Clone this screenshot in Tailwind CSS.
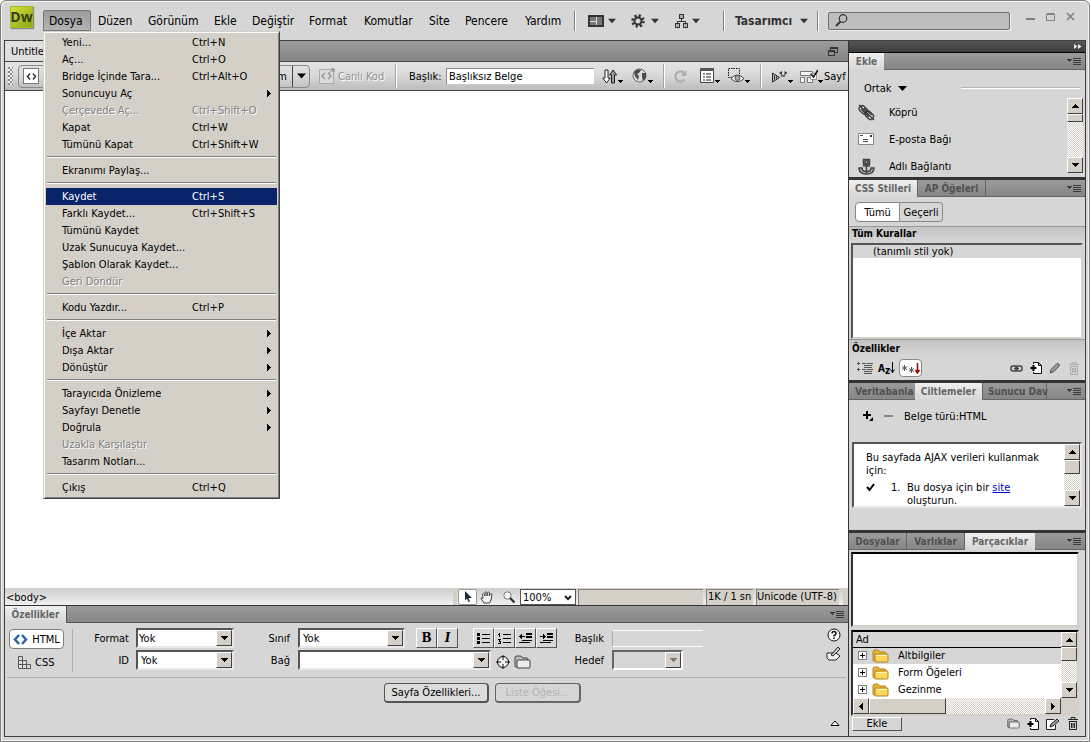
<!DOCTYPE html>
<html lang="tr">
<head>
<meta charset="utf-8">
<title>Dreamweaver</title>
<script src="https://cdn.jsdelivr.net/npm/@tailwindcss/browser@4"></script>
</head>
<body class="bg-white text-black text-[11px] leading-[13px] font-['DejaVu_Sans_Condensed','DejaVu_Sans',sans-serif]">
<svg class="hidden">
  <symbol id="down" viewBox="0 0 9 5"><path d="M0 0h9L4.500 5z" fill="currentColor"/></symbol>
  <symbol id="sdown" viewBox="0 0 7 4" shape-rendering="crispEdges"><path d="M0 0h7v1H6v1H5v1H4v1H3V3H2V2H1V1H0z" fill="currentColor"/></symbol>
  <symbol id="sup" viewBox="0 0 7 4" shape-rendering="crispEdges"><path d="M0 4h7V3H6V2H5V1H4V0H3v1H2v1H1v1H0z" fill="currentColor"/></symbol>
  <symbol id="right" viewBox="0 0 4 7" shape-rendering="crispEdges"><path d="M0 0h1v1h1v1h1v1h1v1H3v1H2v1H1v1H0z" fill="currentColor"/></symbol>
  <symbol id="left" viewBox="0 0 4 7" shape-rendering="crispEdges"><path d="M4 0H3v1H2v1H1v1H0v1h1v1h1v1h1v1h1z" fill="currentColor"/></symbol>
  <symbol id="opts" viewBox="0 0 14 9" shape-rendering="crispEdges"><path d="M0 2h5v1H4v1H3v1H2V4H1V3H0zM6 1h8v1H6zM6 3h8v1H6zM6 5h8v1H6zM6 7h8v1H6z" fill="#3a3a3a"/></symbol>
  <symbol id="folder" viewBox="0 0 17 14"><path d="M1 3Q1 1 3 1h3l2 2h5q1 0 1 2v7H2Q1 12 1 11z" fill="#e8b73a" stroke="#b08322"/><path d="M3 5h12q1 0 1 1v6q0 1-1 1H4q-1 0-1-1z" fill="#f9d85c" stroke="#b08322"/><path d="M4.500 6.500h10" stroke="#fff8c8"/></symbol>
  <symbol id="gfolder" viewBox="0 0 17 14"><path d="M1 3Q1 1 3 1h4l2 2h4q1 0 1 2v7H2Q1 12 1 11z" fill="#bbb" stroke="#444"/><path d="M3 5h12q1 0 1 1v6q0 1-1 1H4q-1 0-1-1z" fill="#ececec" stroke="#444"/></symbol>
  <symbol id="trash" viewBox="0 0 12 13"><path d="M1 2.500h10M4 2V.5h4V2M2 4.500h8M2.500 4.500v8h7v-8M4.500 6v5M6 6v5M7.500 6v5" fill="none" stroke="currentColor"/></symbol>
  <symbol id="newdoc" viewBox="0 0 12 12"><path d="M3.500 2V.5h5l3 3v8h-8V10M8.500.5v3h3" fill="#fff" stroke="#111"/><path d="M3.500 3v6M.5 6h6" stroke="#000" stroke-width="2"/></symbol>
  <symbol id="tick" viewBox="0 0 5 4" shape-rendering="crispEdges"><path d="M0 0h5v1H4v1H3v1H2V2H1V1H0z" fill="#000"/></symbol>
</svg>

<div class="h-screen min-h-[700px] pr-px">
<div class="relative flex flex-col h-full bg-[#d6d6d6] border border-[#808080] rounded-t-md overflow-hidden shadow-[inset_1px_1px_0_#f4f4f4,inset_-1px_-1px_0_#f4f4f4]">

  <header class="flex h-[39px] shrink-0 items-center pl-[9px] pr-[13px] text-[12px] leading-[14px]">
    <div class="w-[23px] h-[22px] mb-2 mr-[10px] shrink-0 flex items-center justify-center bg-linear-to-br from-[#d6e038] to-[#8ca614] border border-[#a5bd20] text-[14px] font-bold text-[#33401a] shadow-[1px_1px_1px_#888] font-['Open_Sans',sans-serif]">Dw</div>
    <nav class="flex [&>button]:h-[21px] [&>button]:shrink-0 [&>button]:text-left [&>button]:whitespace-nowrap">
      <button class="w-[48px] pl-[5px] border border-[#777] rounded-t-xs bg-linear-to-b from-[#9c9c9c] to-[#b4b4b4]">Dosya</button>
      <button class="w-[50px] pl-[7px]">Düzen</button>
      <button class="w-[66px] pl-[7px]">Görünüm</button>
      <button class="w-[38px] pl-[7px]">Ekle</button>
      <button class="w-[57px] pl-[7px]">Değiştir</button>
      <button class="w-[55px] pl-[7px]">Format</button>
      <button class="w-[65px] pl-[7px]">Komutlar</button>
      <button class="w-[36px] pl-[7px]">Site</button>
      <button class="w-[60px] pl-[7px]">Pencere</button>
      <button class="w-[50px] pl-[7px]">Yardım</button>
    </nav>
    <div class="ml-auto flex items-center shrink-0 text-[#333]">
      <span class="w-0.5 h-5 border-l border-[#808080] bg-white mr-3"></span>
      <button aria-label="Düzen" class="flex items-center gap-1 w-[43px]"><svg width="16" height="12" viewBox="0 0 16 12" shape-rendering="crispEdges"><path d="M0 0h16v12H0z" fill="#333"/><path d="M2 2h6v4H2zM2 7h6v3H2zM9 2h5v8H9z" fill="#777"/><path d="M8 2h1v8H8zM2 6h6v1H2z" fill="#ddd"/></svg><svg width="8" height="6"><use href="#down"/></svg></button>
      <button aria-label="Ayarlar" class="flex items-center gap-1.5 w-[44px]"><svg width="14" height="14" viewBox="0 0 14 14"><circle cx="7" cy="7" r="5.500" fill="none" stroke="#333" stroke-width="2.500" stroke-dasharray="2.200 2.120"/><circle cx="7" cy="7" r="3.500" fill="none" stroke="#333" stroke-width="2"/></svg><svg width="8" height="6"><use href="#down"/></svg></button>
      <button aria-label="Site" class="flex items-center gap-1 w-[48px]"><svg width="13" height="14" viewBox="0 0 13 14" fill="#aaa" stroke="#333" shape-rendering="crispEdges"><path d="M4.500.5h4v4h-4zM.5 9.500h4v4h-4zM8.500 9.500h4v4h-4z"/><path d="M6.500 5v2M2.500 9V7.500h8V9" fill="none"/></svg><svg width="8" height="6"><use href="#down"/></svg></button>
      <span class="w-0.5 h-5 border-l border-[#808080] bg-white mr-[10px]"></span>
      <button class="flex items-center justify-between w-[73px] font-bold mr-[9px]">Tasarımcı<svg width="8" height="6"><use href="#down"/></svg></button>
      <span class="w-0.5 h-5 border-l border-[#808080] bg-white mr-[9px]"></span>
      <label class="flex items-center w-[182px] h-[18px] border border-[#6e6e6e] rounded-xs bg-[#bebebe] pl-[6px] shadow-[1px_1px_0_#f0f0f0]"><svg width="13" height="13" viewBox="0 0 13 13" fill="none" stroke="#333"><circle cx="8" cy="4.500" r="3.800" stroke-width="1.200"/><path d="M5.500 7.500L1 12" stroke-width="1.800"/></svg><input aria-label="Ara" class="min-w-0 flex-1 outline-none bg-transparent"></label>
      <div class="flex items-center gap-[10px] ml-[16px] mb-2 text-[#808080]">
        <button aria-label="Küçült"><svg width="10" height="10" viewBox="0 0 10 10"><path d="M0 7h9" stroke="currentColor" stroke-width="2"/></svg></button>
        <button aria-label="Büyüt"><svg width="10" height="10" viewBox="0 0 10 10"><path d="M.5 2.500h8v6h-8zM.5 1.500h8" fill="none" stroke="currentColor"/></svg></button>
        <button aria-label="Kapat"><svg width="10" height="10" viewBox="0 0 10 10"><path d="M1 1l7 7M8 1L1 8" stroke="currentColor" stroke-width="1.500"/></svg></button>
      </div>
    </div>
  </header>

  <div class="flex flex-1 min-h-0 mx-[3px] mb-1 border border-[#3f3f3f]">
    <main class="flex flex-col flex-1 min-w-0">
      <div class="flex h-[21px] shrink-0 bg-linear-to-b from-[#9b9b9b] to-[#868686] border-b border-[#444] items-center">
        <button class="w-[100px] h-5 pl-1.5 text-left bg-[#e0e0e0]">Untitled-1</button>
        <button aria-label="Geri yükle" class="ml-auto mr-[10px]"><svg width="10" height="9" viewBox="0 0 10 9" fill="none" stroke="#333" shape-rendering="crispEdges"><path d="M.5 3.500h6v5h-6zM0 4.500h7M2.500 3V.5h7v5H7M2 1.500h8"/></svg></button>
      </div>

      <div class="flex h-[29px] shrink-0 items-center overflow-hidden bg-linear-to-b from-[#e4e4e4] via-[#d8d8d8] to-[#bcbcbc] border-b border-[#444] whitespace-nowrap [&>*]:shrink-0">
        <span class="w-[5px] h-[18px] ml-[3px] mr-[5px] bg-[repeating-conic-gradient(#f4f4f4_0_25%,#888_0_50%)] bg-[length:4px_4px]"></span>
        <div class="flex items-center w-[292px] h-[23px] border border-[#888] rounded">
          <button aria-label="Kod" class="ml-[4px] w-4 h-4 bg-white border border-[#777] flex items-center justify-center"><svg width="11" height="7" viewBox="0 0 11 7" fill="none" stroke="#333" stroke-width="1.500"><path d="M4 .5L1.500 3.500 4 6.500M7 .5l2.500 3L7 6.500"/></svg></button>
          <button class="ml-auto mr-[5px]">Tasarım</button>
          <button aria-label="Seçenekler" class="w-[17px] h-[21px] border-l border-[#444] flex items-center justify-center"><svg width="9" height="6"><use href="#down"/></svg></button>
        </div>
        <button disabled class="flex items-center w-[76px] ml-[9px] gap-[3px] text-[#909090] [text-shadow:1px_1px_0_#fff]"><svg width="16" height="16" viewBox="0 0 16 16"><path d="M.5 1.500h14v14H.5z" fill="#dcdcdc" stroke="#aaa"/><path d="M6 5L3 8l3 3M9 5l3 3-3 3" fill="none" stroke="#999" stroke-width="1.500"/><path d="M10 5l5-4M12 1h3v3" fill="none" stroke="#888"/></svg>Canlı Kod</button>
        <span class="w-0.5 h-6 border-l border-[#a5a5a5] bg-white mr-3"></span>
        <label for="docTitle" class="w-[37px]">Başlık:</label>
        <input id="docTitle" value="Başlıksız Belge" class="w-[148px] h-4 px-0.5 bg-white border-t border-l border-[#888] outline-none">
        <div class="flex items-center ml-[8px] w-[61px] gap-[9px] [&>button]:flex [&>button]:items-end">
          <button aria-label="Dosya yönetimi"><svg width="16" height="15" viewBox="0 0 16 15" fill="#fff" stroke="#222"><path d="M3 1h3v8h2.200L4.500 14 .8 9H3z"/><path d="M9.500 14h3V6h2.200L11 1 7.500 6h2z" fill="#999"/></svg><svg width="5" height="4"><use href="#tick"/></svg></button>
          <button aria-label="Önizleme"><svg width="16" height="16" viewBox="0 0 16 16"><circle cx="7.500" cy="7.500" r="6.500" fill="#dcdcdc" stroke="#666"/><path d="M2 4q4-4 7-2L7 5 5 6l2 2-1 4-3-4zM10 5l4 0 0 5-3 3-1-4z" fill="#4c4c4c"/></svg><svg width="5" height="4"><use href="#tick"/></svg></button>
        </div>
        <span class="w-0.5 h-6 border-l border-[#a5a5a5] bg-white mr-2"></span>
        <div class="flex items-center w-[87px] [&>button]:flex [&>button]:items-end">
          <button aria-label="Yenile" class="w-[27px]"><svg width="15" height="15" viewBox="0 0 15 15"><path d="M11.500 10.500A5 5 0 1 1 11 4" fill="none" stroke="#b0b0b0" stroke-width="2.500"/><path d="M13.500 1v6h-6z" fill="#b0b0b0"/></svg></button>
          <button aria-label="Görünüm" class="w-[28px]"><svg width="15" height="16" viewBox="0 0 15 16"><path d="M.5.5h13v14H.5z" fill="#fff" stroke="#444"/><path d="M0 0h14v3H0z" fill="#555"/><path d="M3 6h2M3 9h2M3 12h2M6 6h5M6 9h5M6 12h5" stroke="#222"/></svg><svg width="5" height="4"><use href="#tick"/></svg></button>
          <button aria-label="Görsel yardımlar"><svg width="17" height="16" viewBox="0 0 17 16"><path d="M.5.5h11v9H.5z" fill="none" stroke="#111" stroke-dasharray="1.500 1"/><path d="M3 10.500Q9.500 3.500 16 10.500 9.500 17 3 10.500z" fill="#fff" stroke="#444"/><circle cx="9.500" cy="10" r="2.500" fill="#aaa" stroke="#555"/></svg><svg width="5" height="4"><use href="#tick"/></svg></button>
        </div>
        <span class="w-0.5 h-6 border-l border-[#a5a5a5] bg-white mr-[9px]"></span>
        <div class="flex items-center [&>button]:flex [&>button]:items-end">
          <button aria-label="Doğrula" class="w-[29px]"><svg width="17" height="15" viewBox="0 0 17 15"><path d="M1.500 4v9l7-4.500z" fill="#bbb" stroke="#222"/><path d="M3.500 6.500v4M5.500 7.500v2" stroke="#222"/><path d="M8 4l3-2v4zM16.500 4l-3-2v4z" fill="#333"/><path d="M10 6q2 2 4 0" fill="none" stroke="#666" stroke-width="2"/></svg><svg width="5" height="4"><use href="#tick"/></svg></button>
          <button aria-label="Sayfayı denetle"><svg width="18" height="15" viewBox="0 0 18 15"><path d="M.5 2.500h12v4H.5zM.5 8.500h4v5h-4zM7.500 8.500h5v5h-5z" fill="#f8f8f8" stroke="#777"/><path d="M10.500 4.500h6v6h-6z" fill="#fff" stroke="#999"/><path d="M11 5l2.500 3L18 1" fill="none" stroke="#111" stroke-width="1.500"/></svg><svg width="5" height="4"><use href="#tick"/></svg></button>
          <button class="pl-px">Sayf</button>
        </div>
      </div>

      <section aria-label="Tuval" class="flex-1 min-h-0 bg-white"></section>

      <div class="flex h-[18px] shrink-0 items-center border-t border-b border-b-[#333] border-t-[#d4d0c8] bg-linear-to-b from-[#d0d0d0] to-[#f0f0f0] whitespace-nowrap">
        <button class="pl-px">&lt;body&gt;</button>
        <div class="ml-auto flex items-center shrink-0">
          <span class="w-1 h-4 bg-[#d4d0c8] mr-px"></span>
          <button aria-label="Seç" class="w-[19px] h-4 flex items-center justify-center bg-white border border-[#999] rounded-xs"><svg width="8" height="12" viewBox="0 0 8 12"><path d="M1 0v9.500l2-2L4.500 11 6 10.500 4.500 7H8z" fill="#1b2a3c"/></svg></button>
          <button aria-label="El" class="w-[20px] flex justify-center"><svg width="14" height="13" viewBox="0 0 14 13"><path d="M4 12L1 7.500q0-1.500 2 0L2.500 3q1-1.500 2 0L5 5V1.500q1-1.500 2 0V5l.8-3.500q1-1 1.700.3L9.200 5l1.500-2.200q1.300-.5 1.300 1L11 9l-1.500 3z" fill="#f4f4f4" stroke="#444"/></svg></button>
          <button aria-label="Yakınlaştır" class="w-[23px] flex justify-center"><svg width="12" height="12" viewBox="0 0 12 12"><circle cx="4.500" cy="4.500" r="3.700" fill="#f4f4f4" stroke="#777"/><path d="M7 7l4.500 4.500" stroke="#222" stroke-width="2"/></svg></button>
          <div class="relative w-[56px]"><select aria-label="Büyütme" class="w-full h-4 pl-[2px] bg-white border border-[#555] appearance-none"><option>100%</option></select><svg class="absolute right-1 top-1.5 pointer-events-none" width="8" height="6" viewBox="0 0 8 6"><path d="M1 1l3 3 3-3" fill="none" stroke="#222" stroke-width="2"/></svg></div>
          <span class="w-[125px] h-4 ml-0.5 mr-[3px] bg-[#d4d0c8] border-t border-l border-[#808080]"></span>
          <span class="w-[47px] h-4 mr-[3px] pl-px bg-[#d4d0c8] border-t border-l border-[#808080]">1K / 1 sn</span>
          <span class="w-[83px] h-4 mr-1 bg-[#d4d0c8] border-t border-l border-[#808080]">Unicode (UTF-8)</span>
          <span class="w-[5px] h-4 bg-[#d4d0c8]"></span>
        </div>
      </div>

      <section class="shrink-0">
        <div class="flex h-[17px] items-stretch bg-linear-to-b from-[#9b9b9b] to-[#868686] border-b border-[#555]">
          <button class="w-[62px] h-[17px] bg-linear-to-b from-[#f0f0f0] to-[#d6d6d6] border-r border-[#555] font-bold text-[10px] text-[#666]">Özellikler</button>
          <button aria-label="Panel seçenekleri" class="ml-auto mr-1"><svg width="14" height="9"><use href="#opts"/></svg></button>
        </div>
        <div class="flex h-[55px] mx-[2px] pt-[5px] border-b border-[#b0b0b0] [&_label]:text-right whitespace-nowrap">
          <div class="w-[66px] pl-0.5 border-r border-[#b0b0b0] h-[43px] mt-px flex flex-col gap-1">
            <button class="w-[55px] h-5 flex items-center justify-center gap-1 bg-white border border-[#808080] rounded-sm"><svg width="15" height="11" viewBox="0 0 15 11" fill="none" stroke="#2a63a8" stroke-width="2.500"><path d="M6 1L2 5.500 6 10M9 1l4 4.500L9 10"/></svg>HTML</button>
            <button class="flex items-center gap-1 pl-[9px] h-[18px]"><svg width="13" height="13" viewBox="0 0 13 13" fill="#ddd" stroke="#555"><path d="M.5.500h4v4h-4zM.5 4.500h4v4h-4zM.5 8.500h4v4h-4zM4.500 4.500h4v4h-4zM4.500 8.500h4v4h-4zM8.500 8.500h4v4h-4z"/></svg>CSS</button>
          </div>
          <div class="grid grid-cols-[56px_98px] gap-x-[7px] gap-y-0.5 auto-rows-[20px] items-center">
            <label for="fmt">Format</label>
            <div class="relative"><select id="fmt" class="w-full h-5 px-px bg-white border-2 border-t-[#555] border-l-[#555] border-r-[#e8e8e8] border-b-[#e8e8e8] appearance-none"><option>Yok</option></select><span class="pointer-events-none absolute right-0.5 top-0.5 w-4 h-4 bg-[#d4d0c8] border border-t-white border-l-white border-r-[#404040] border-b-[#404040] flex items-center justify-center"><svg width="7" height="4"><use href="#sdown"/></svg></span></div>
            <label for="idsel">ID</label>
            <div class="relative"><select id="idsel" class="w-full h-5 pl-[3px] bg-white border-2 border-t-[#555] border-l-[#555] border-r-[#e8e8e8] border-b-[#e8e8e8] appearance-none"><option>Yok</option></select><span class="pointer-events-none absolute right-0.5 top-0.5 w-4 h-4 bg-[#d4d0c8] border border-t-white border-l-white border-r-[#404040] border-b-[#404040] flex items-center justify-center"><svg width="7" height="4"><use href="#sdown"/></svg></span></div>
          </div>
          <div class="grid grid-cols-[56px_auto] gap-x-[8px] gap-y-0.5 auto-rows-[20px] items-center content-start">
            <label for="cls">Sınıf</label>
            <div class="flex items-center">
              <div class="relative w-[107px]"><select id="cls" class="w-full h-5 pl-[3px] bg-white border-2 border-t-[#555] border-l-[#555] border-r-[#e8e8e8] border-b-[#e8e8e8] appearance-none"><option>Yok</option></select><span class="pointer-events-none absolute right-0.5 top-0.5 w-4 h-4 bg-[#d4d0c8] border border-t-white border-l-white border-r-[#404040] border-b-[#404040] flex items-center justify-center"><svg width="7" height="4"><use href="#sdown"/></svg></span></div>
              <div class="flex ml-[11px] mr-[15px] [&>button]:w-[21px] [&>button]:h-5 [&>button]:border [&>button]:border-t-white [&>button]:border-l-white [&>button]:border-r-[#555] [&>button]:border-b-[#555] text-[12px] font-bold font-['DejaVu_Serif',serif]"><button>B</button><button class="italic">I</button></div>
              <div class="flex [&>button]:w-[21px] [&>button]:h-5 [&>button]:border [&>button]:border-t-white [&>button]:border-l-white [&>button]:border-r-[#555] [&>button]:border-b-[#555] [&>button]:flex [&>button]:items-center [&>button]:justify-center">
                <button aria-label="Madde işaretli liste"><svg width="13" height="11" viewBox="0 0 13 11" shape-rendering="crispEdges"><path d="M0 0h3v3H0zM0 4h3v3H0zM0 8h3v3H0zM5 1h8v1H5zM5 5h8v1H5zM5 9h8v1H5z"/></svg></button>
                <button aria-label="Sıralı liste"><svg width="13" height="11" viewBox="0 0 13 11" shape-rendering="crispEdges"><path d="M1 0h1v4H1zM0 1h1v1H0zM0 6h3v1H2v1h1v3H0v-1h2V9H1V7H0zM5 1h8v1H5zM5 5h8v1H5zM5 9h8v1H5z"/></svg></button>
                <button aria-label="Girintiyi azalt"><svg width="13" height="11" viewBox="0 0 13 11" shape-rendering="crispEdges"><path d="M0 3h6v1H0zM1 2h2v3H1zM2 1h1v5H2zM7 0h6v2H7zM7 3h6v2H7zM3 7h10v1H3zM0 9h11v1H0z"/></svg></button>
                <button aria-label="Girintiyi artır"><svg width="13" height="11" viewBox="0 0 13 11" shape-rendering="crispEdges"><path d="M0 3h6v1H0zM3 2h2v3H3zM3 1h1v5H3zM7 0h6v2H7zM7 3h6v2H7zM3 7h10v1H3zM0 9h11v1H0z"/></svg></button>
              </div>
            </div>
            <label for="link">Bağ</label>
            <div class="flex items-center">
              <div class="relative w-[193px]"><input id="link" class="w-full h-5 px-1 bg-white border-2 border-t-[#555] border-l-[#555] border-r-[#e8e8e8] border-b-[#e8e8e8] outline-none"><span class="pointer-events-none absolute right-0.5 top-0.5 w-4 h-4 bg-[#d4d0c8] border border-t-white border-l-white border-r-[#404040] border-b-[#404040] flex items-center justify-center"><svg width="7" height="4"><use href="#sdown"/></svg></span></div>
              <button aria-label="Dosyayı göster" class="ml-[5px] mr-1 pt-1"><svg width="14" height="14" viewBox="0 0 14 14" fill="none" stroke="#111"><circle cx="7" cy="7" r="5.500" fill="#eee"/><path d="M7 0v5M7 9v5M0 7h5M9 7h5"/></svg></button>
              <button aria-label="Gözat" class="pt-1"><svg width="17" height="14"><use href="#gfolder"/></svg></button>
            </div>
          </div>
          <div class="grid grid-cols-[42px_92px] ml-[5px] gap-x-[8px] gap-y-0.5 auto-rows-[20px] items-center content-start">
            <label for="ttl">Başlık</label>
            <input id="ttl" class="w-[91px] h-[17px] px-1 border-y border-l border-t-white border-b-white border-l-[#aaa] outline-none">
            <label for="tgt">Hedef</label>
            <div class="relative w-[71px]"><select id="tgt" disabled class="w-full h-5 border-2 border-t-[#666] border-l-[#666] border-r-white border-b-white appearance-none opacity-100"><option></option></select><span class="pointer-events-none absolute right-0.5 top-0.5 w-4 h-4 bg-[#d4d0c8] border border-t-white border-l-white border-r-[#404040] border-b-[#404040] flex items-center justify-center text-[#777]"><svg width="7" height="4"><use href="#sdown"/></svg></span></div>
          </div>
          <div class="ml-auto mr-[5px] flex flex-col gap-1 items-center">
            <button aria-label="Yardım"><svg width="14" height="14" viewBox="0 0 14 14" fill="none" stroke="#111"><circle cx="7" cy="7" r="6" fill="#fff"/><path d="M5 5.500Q5 3.500 7 3.500t2 2Q9 7 7 7.500v1M7 9.500v1.500" stroke-width="1.500"/></svg></button>
            <button aria-label="Düzenle"><svg width="15" height="15" viewBox="0 0 15 15"><path d="M1 7h9l4 3-4 4H3l-2-2z" fill="#f4f4f4" stroke="#222"/><path d="M5 9L12 1l2 2-7 7z" fill="#ccc" stroke="#222"/></svg></button>
          </div>
        </div>
        <div class="flex h-[58px] gap-[6px] pt-[5px] pl-[379px] pr-2 [&>button]:h-5 whitespace-nowrap">
          <button class="w-[105px] border border-[#555] border-r-2 border-b-2 rounded-sm bg-[#dcdcdc]">Sayfa Özellikleri...</button>
          <button disabled class="w-[86px] border border-[#666] border-r-2 border-b-2 rounded-sm text-[#b4b4b4]">Liste Öğesi...</button>
          <a href="#" aria-label="Daralt" class="ml-auto self-end mb-2.5"><svg width="10" height="6" viewBox="0 0 10 6"><path d="M1 5.500h8L5 1z" fill="#fff" stroke="#000"/></svg></a>
        </div>
      </section>
    </main>

    <aside class="flex flex-col w-[237px] shrink-0 border-l border-[#333] whitespace-nowrap">
      <div class="flex justify-end items-center h-3 pr-[3px] shrink-0 bg-linear-to-b from-[#555] to-[#3c3c3c] border-b border-black"><svg width="8" height="5" viewBox="0 0 8 5"><path d="M0 0l3.500 2.500L0 5zM4 0l3.500 2.500L4 5z" fill="#eee"/></svg></div>

      <section class="shrink-0 h-[127px] border-b-[3px] border-[#333] flex flex-col">
        <div class="flex h-[17px] shrink-0 bg-linear-to-b from-[#9b9b9b] to-[#868686] border-b border-[#666] font-bold text-[10px]">
          <button class="w-[35px] h-[17px] bg-linear-to-b from-[#f0f0f0] to-[#d6d6d6] text-[#666]">Ekle</button>
          <button aria-label="Panel seçenekleri" class="ml-auto mr-1"><svg width="14" height="9"><use href="#opts"/></svg></button>
        </div>
        <div class="flex items-center justify-between h-[28px] shrink-0 pl-[15px] pr-[5px] pt-2"><button class="flex items-center gap-1.5">Ortak<svg width="9" height="5"><use href="#down"/></svg></button><span class="w-[119px] border-t border-[#b5b5b5] h-0.5 bg-white"></span></div>
        <div class="flex flex-1 min-h-0 pr-[2px]">
          <ul class="flex-1 pl-[9px] pt-px [&>li>button]:flex [&>li>button]:items-center [&>li>button]:h-[27px] [&>li>button]:gap-[14px]">
            <li><button><svg width="17" height="17" viewBox="0 0 17 17" fill="none"><rect x="-4" y="-3" width="9" height="6" rx="3" transform="translate(5 5.500) rotate(45)" fill="#eee" stroke="#444" stroke-width="1.500"/><rect x="-4" y="-3" width="9" height="6" rx="3" transform="translate(11 11) rotate(45)" fill="#eee" stroke="#444" stroke-width="1.500"/><path d="M1 1l15 15M3 5l8 8M6 4l8 7" stroke="#333" stroke-width="1.200"/></svg>Köprü</button></li>
            <li><button><svg width="17" height="13" viewBox="0 0 17 13"><path d="M.5.5h15v11H.5z" fill="#fff" stroke="#888"/><path d="M2 2.500h3M5 6.500h5M5 8.500h5" stroke="#444"/><path d="M12 2h2v2h-2z" fill="#333"/></svg>E-posta Bağı</button></li>
            <li><button><svg width="17" height="17" viewBox="0 0 17 17" fill="none" stroke="#444" stroke-width="1.500"><path d="M5.500 1.500h6v5h-6z" fill="#888"/><circle cx="8.500" cy="4" r="1.500" fill="#ddd"/><path d="M8.500 7v8M5 8h7M1 10h3q0 3.500 4.500 3.500T13 10h3q0 6-7.500 6T1 10z" fill="#aaa"/></svg>Adlı Bağlantı</button></li>
          </ul>
          <div class="w-4 h-[75px] flex flex-col bg-[repeating-conic-gradient(#fff_0_25%,#d4d0c8_0_50%)] bg-[length:2px_2px] [&>*]:bg-[#d4d0c8] [&>*]:border [&>*]:border-t-white [&>*]:border-l-white [&>*]:border-r-[#404040] [&>*]:border-b-[#404040]"><button aria-label="Yukarı" class="h-4 flex items-center justify-center"><svg width="7" height="4"><use href="#sup"/></svg></button><span class="h-2"></span><button aria-label="Aşağı" class="mt-auto h-4 flex items-center justify-center"><svg width="7" height="4"><use href="#sdown"/></svg></button></div>
        </div>
      </section>

      <section class="shrink-0 h-[203px] border-b-[3px] border-[#333] flex flex-col">
        <div class="flex h-[17px] shrink-0 bg-linear-to-b from-[#9b9b9b] to-[#868686] border-b border-[#666] font-bold text-[10px]">
          <button class="w-[68px] h-[17px] bg-linear-to-b from-[#f0f0f0] to-[#d6d6d6] text-[#666]">CSS Stilleri</button>
          <button class="w-[69px] border-x border-[#666] text-[#505050]">AP Öğeleri</button>
          <button aria-label="Panel seçenekleri" class="ml-auto mr-1"><svg width="14" height="9"><use href="#opts"/></svg></button>
        </div>
        <div class="flex h-[29px] pl-[6px] pt-[5px]"><button class="w-[45px] h-5 bg-white border border-[#888] rounded-l-sm">Tümü</button><button class="w-[43px] h-5 border border-l-0 border-[#888] rounded-r-sm">Geçerli</button></div>
        <h3 class="h-[17px] pl-[3px] border-t border-[#999] bg-linear-to-b from-[#c4c4c4] to-[#d6d6d6] font-bold text-[10px]">Tüm Kurallar</h3>
        <div class="flex-1 ml-[2px] mr-[2px] bg-white border-2 border-t-[#555] border-l-[#555] border-b-[#d4d0c8] border-r-[#d4d0c8]"><div class="h-[13px] pl-[20px] bg-[#d6d6d6]">(tanımlı stil yok)</div></div>
        <h3 class="h-[18px] pl-[3px] pt-0.5 border-t border-[#999] bg-linear-to-b from-[#c4c4c4] to-[#d6d6d6] font-bold text-[10px]">Özellikler</h3>
        <div class="flex items-center h-[22px] pl-2 pr-[5px] mb-px">
          <button aria-label="Kategori görünümü" class="w-[21px]"><svg width="16" height="12" viewBox="0 0 16 12" stroke="#555" shape-rendering="crispEdges"><path d="M5 1.500h4M10 1.500h6M7 3.500h8M7 5.500h8M5 7.500h4M10 7.500h6M7 9.500h8M7 11.500h8"/><path d="M0 1.500h3M1.500 0v3M0 7.500h3M1.500 6v3"/></svg></button>
          <button aria-label="Liste görünümü" class="w-[21px] flex items-center font-bold text-[10px]">A<span class="pt-1">z</span><svg width="5" height="12" viewBox="0 0 5 12"><path d="M2.500 0v11M.5 7.500l2 3 2-3" fill="none" stroke="#000"/></svg></button>
          <button aria-label="Ayarlı özellikler" class="w-[23px] h-[18px] flex items-center justify-center bg-white border border-[#888] rounded-sm"><svg width="19" height="13" viewBox="0 0 19 13" fill="none"><path d="M3.500 3v6M1 4.500l5 3M1 7.500l5-3M10.500 5v6M8 6.500l5 3M8 9.500l5-3" stroke="#555"/><path d="M16.500 1v10M14.500 8l2 3 2-3" stroke="#900" stroke-width="1.500"/></svg></button>
          <div class="ml-auto flex items-center gap-[7px] text-[#aaa]">
            <button aria-label="Stil bağla"><svg width="13" height="7" viewBox="0 0 13 7" fill="none" stroke="#444" stroke-width="1.500"><rect x="1" y="1" width="6" height="5" rx="2"/><rect x="6" y="1" width="6" height="5" rx="2"/><path d="M4 3.500h5"/></svg></button>
            <button aria-label="Yeni kural"><svg width="12" height="12"><use href="#newdoc"/></svg></button>
            <button aria-label="Düzenle"><svg width="12" height="12" viewBox="0 0 12 12"><path d="M1 11l1-3.500L8 1.500q2-.5 2.500 2L4.500 10z" fill="#999" stroke="#555"/></svg></button>
            <button aria-label="Sil"><svg width="12" height="13"><use href="#trash"/></svg></button>
          </div>
        </div>
      </section>

      <section class="shrink-0 h-[150px] border-b-[3px] border-[#333] flex flex-col">
        <div class="flex h-[17px] shrink-0 bg-linear-to-b from-[#9b9b9b] to-[#868686] border-b border-[#666] font-bold text-[10px]">
          <button class="w-[66px] pl-1.5 text-left text-[#505050]">Veritabanla</button>
          <button class="w-[67px] h-[17px] bg-linear-to-b from-[#f0f0f0] to-[#d6d6d6] text-[#666]">Ciltlemeler</button>
          <button class="w-[65px] pl-[5px] text-left border-x border-[#666] text-[#505050]">Sunucu Dav</button>
          <button aria-label="Panel seçenekleri" class="ml-auto mr-1"><svg width="14" height="9"><use href="#opts"/></svg></button>
        </div>
        <div class="flex items-center h-[32px] pl-[13px]"><button aria-label="Ekle" class="w-[22px]"><svg width="13" height="12" viewBox="0 0 13 12"><path d="M5 1v8M1 5h8" stroke="#000" stroke-width="2"/><path d="M11 7v4H7z"/></svg></button><button aria-label="Çıkar" class="w-5"><svg width="9" height="2"><path d="M0 1h9" stroke="#888" stroke-width="2"/></svg></button>Belge türü:HTML</div>
        <div class="mt-[10px] ml-[3px] mr-[3px] h-[66px] flex overflow-hidden bg-white border-2 border-t-[#555] border-l-[#555] border-b-[#e8e8e8] border-r-[#e8e8e8]">
          <div class="flex-1 min-w-0 pl-3 pt-[7px]">
            <p>Bu sayfada AJAX verileri kullanmak<br>için:</p>
            <div class="flex pt-1"><svg class="mt-0.5" width="25" height="9" viewBox="0 0 25 9"><path d="M1 4l2.500 3L8 1" fill="none" stroke="#000" stroke-width="2"/></svg><span class="w-4">1.</span><p>Bu dosya için bir <a href="#" class="text-[#0000cc] underline">site</a><br>oluşturun.</p></div>
          </div>
          <div class="w-4 flex flex-col bg-[repeating-conic-gradient(#fff_0_25%,#d4d0c8_0_50%)] bg-[length:2px_2px] [&>*]:bg-[#d4d0c8] [&>*]:border [&>*]:border-t-white [&>*]:border-l-white [&>*]:border-r-[#404040] [&>*]:border-b-[#404040]"><button aria-label="Yukarı" class="h-4 flex items-center justify-center"><svg width="7" height="4"><use href="#sup"/></svg></button><span class="h-[14px]"></span><button aria-label="Aşağı" class="mt-auto h-4 flex items-center justify-center"><svg width="7" height="4"><use href="#sdown"/></svg></button></div>
        </div>
      </section>

      <section class="flex-1 min-h-0 flex flex-col">
        <div class="flex h-[17px] shrink-0 bg-linear-to-b from-[#9b9b9b] to-[#868686] border-b border-[#666] font-bold text-[10px]">
          <button class="w-[58px] border-r border-[#666] text-[#505050]">Dosyalar</button>
          <button class="w-[58px] border-r border-[#666] text-[#505050]">Varlıklar</button>
          <button class="w-[70px] h-[17px] bg-linear-to-b from-[#f0f0f0] to-[#d6d6d6] text-[#666]">Parçacıklar</button>
          <button aria-label="Panel seçenekleri" class="ml-auto mr-1"><svg width="14" height="9"><use href="#opts"/></svg></button>
        </div>
        <div class="flex-1 mt-[2px] ml-[2px] mr-[6px] bg-white border-2 border-t-black border-l-[#333] border-b-[#d4d0c8] border-r-[#d4d0c8]"></div>
        <div class="shrink-0 mt-[3px] ml-[2px] mr-[6px] flex flex-col bg-white border-2 border-t-black border-l-[#333] border-b-[#d4d0c8] border-r-[#d4d0c8]">
          <div class="flex h-[66px]">
            <table class="flex-1 h-[66px] border-collapse"><thead><tr class="h-[15px] bg-[#d6d6d6] border-b border-black"><th class="text-left font-normal p-0 pl-[3px]">Ad</th></tr></thead>
              <tbody class="[&>tr]:h-[17px] [&_td]:p-0">
                <tr class="bg-[#d6d6d6]"><td><div class="flex items-center pl-[5px]"><button aria-label="Genişlet" class="w-[9px] h-[9px] mr-[5px]"><svg width="9" height="9" shape-rendering="crispEdges"><path d="M.5.5h8v8h-8z" fill="#fff" stroke="#808080"/><path d="M2 4.500h5M4.500 2v5" stroke="#000"/></svg></button><svg class="mr-[9px]" width="17" height="14"><use href="#folder"/></svg>Altbilgiler</div></td></tr>
                <tr><td><div class="flex items-center pl-[5px]"><button aria-label="Genişlet" class="w-[9px] h-[9px] mr-[5px]"><svg width="9" height="9" shape-rendering="crispEdges"><path d="M.5.5h8v8h-8z" fill="#fff" stroke="#808080"/><path d="M2 4.500h5M4.500 2v5" stroke="#000"/></svg></button><svg class="mr-[9px]" width="17" height="14"><use href="#folder"/></svg>Form Öğeleri</div></td></tr>
                <tr><td><div class="flex items-center pl-[5px]"><button aria-label="Genişlet" class="w-[9px] h-[9px] mr-[5px]"><svg width="9" height="9" shape-rendering="crispEdges"><path d="M.5.5h8v8h-8z" fill="#fff" stroke="#808080"/><path d="M2 4.500h5M4.500 2v5" stroke="#000"/></svg></button><svg class="mr-[9px]" width="17" height="14"><use href="#folder"/></svg>Gezinme</div></td></tr>
              </tbody></table>
            <div class="w-4 flex flex-col bg-[repeating-conic-gradient(#fff_0_25%,#d4d0c8_0_50%)] bg-[length:2px_2px] [&>*]:bg-[#d4d0c8] [&>*]:border [&>*]:border-t-white [&>*]:border-l-white [&>*]:border-r-[#404040] [&>*]:border-b-[#404040]"><button aria-label="Yukarı" class="h-[15px] flex items-center justify-center"><svg width="7" height="4"><use href="#sup"/></svg></button><span class="h-[14px]"></span><button aria-label="Aşağı" class="mt-auto h-4 flex items-center justify-center"><svg width="7" height="4"><use href="#sdown"/></svg></button></div>
          </div>
          <div class="flex h-4 pr-4 bg-[#d4d0c8]"><div class="flex flex-1 bg-[repeating-conic-gradient(#fff_0_25%,#d4d0c8_0_50%)] bg-[length:2px_2px] [&>*]:bg-[#d4d0c8] [&>*]:border [&>*]:border-t-white [&>*]:border-l-white [&>*]:border-r-[#404040] [&>*]:border-b-[#404040]"><button aria-label="Sola" class="w-4 flex items-center justify-center"><svg width="4" height="7"><use href="#left"/></svg></button><span class="w-[77px]"></span><button aria-label="Sağa" class="ml-auto w-4 flex items-center justify-center"><svg width="4" height="7"><use href="#right"/></svg></button></div></div>
        </div>
        <div class="flex items-start shrink-0 h-[20px] pt-px pl-[3px] pr-[6px]">
          <button class="w-[50px] h-[14px] leading-[12px] border border-t-white border-l-white border-r-[#555] border-b-[#555]">Ekle</button>
          <div class="ml-auto flex items-center gap-[7px] text-[#222]">
            <button aria-label="Yeni klasör"><svg width="13" height="11" viewBox="0 0 17 14"><use href="#gfolder"/></svg></button>
            <button aria-label="Yeni parçacık"><svg width="12" height="12"><use href="#newdoc"/></svg></button>
            <button aria-label="Düzenle"><svg width="14" height="12" viewBox="0 0 14 12"><path d="M8 1.500H.5v10h9V7" fill="#fff" stroke="#222"/><path d="M4 9l1-3 6-5 2 2-6 5z" fill="#999" stroke="#222"/></svg></button>
            <button aria-label="Sil"><svg width="12" height="13"><use href="#trash"/></svg></button>
          </div>
        </div>
      </section>
    </aside>
  </div>

  <div role="menu" class="absolute left-[42px] top-[30px] w-[237px] p-[2px] bg-[#d4d0c8] border border-t-[#d4d0c8] border-l-[#d4d0c8] border-r-[#404040] border-b-[#404040] shadow-[inset_1px_1px_0_#fff,inset_-1px_-1px_0_#808080] whitespace-nowrap [&>button]:grid [&>button]:grid-cols-[130px_1fr_auto] [&>button]:items-center [&>button]:w-full [&>button]:h-[17px] [&>button]:pl-[16px] [&>button]:pr-[6px] [&>button]:text-left [&>button>svg]:col-start-3 [&>hr]:mt-[3px] [&>hr]:mb-[5px] [&>hr]:mx-px [&>hr]:h-0 [&>hr]:border-t [&>hr]:border-[#808080] [&>hr]:shadow-[0_1px_0_#fff] [&>button:disabled]:text-[#808080] [&>button:disabled]:[text-shadow:1px_1px_0_#fff]">
    <button>Yeni...<span>Ctrl+N</span></button>
    <button>Aç...<span>Ctrl+O</span></button>
    <button>Bridge İçinde Tara...<span>Ctrl+Alt+O</span></button>
    <button>Sonuncuyu Aç<svg width="4" height="7"><use href="#right"/></svg></button>
    <button disabled>Çerçevede Aç...<span>Ctrl+Shift+O</span></button>
    <button>Kapat<span>Ctrl+W</span></button>
    <button>Tümünü Kapat<span>Ctrl+Shift+W</span></button>
    <hr>
    <button>Ekranımı Paylaş...</button>
    <hr>
    <button class="bg-[#0a246a] text-white">Kaydet<span>Ctrl+S</span></button>
    <button>Farklı Kaydet...<span>Ctrl+Shift+S</span></button>
    <button>Tümünü Kaydet</button>
    <button>Uzak Sunucuya Kaydet...</button>
    <button>Şablon Olarak Kaydet...</button>
    <button disabled>Geri Döndür</button>
    <hr>
    <button>Kodu Yazdır...<span>Ctrl+P</span></button>
    <hr>
    <button>İçe Aktar<svg width="4" height="7"><use href="#right"/></svg></button>
    <button>Dışa Aktar<svg width="4" height="7"><use href="#right"/></svg></button>
    <button>Dönüştür<svg width="4" height="7"><use href="#right"/></svg></button>
    <hr>
    <button>Tarayıcıda Önizleme<svg width="4" height="7"><use href="#right"/></svg></button>
    <button>Sayfayı Denetle<svg width="4" height="7"><use href="#right"/></svg></button>
    <button>Doğrula<svg width="4" height="7"><use href="#right"/></svg></button>
    <button disabled>Uzakla Karşılaştır</button>
    <button>Tasarım Notları...</button>
    <hr>
    <button>Çıkış<span>Ctrl+Q</span></button>
  </div>
</div>
</div>
</body>
</html>
